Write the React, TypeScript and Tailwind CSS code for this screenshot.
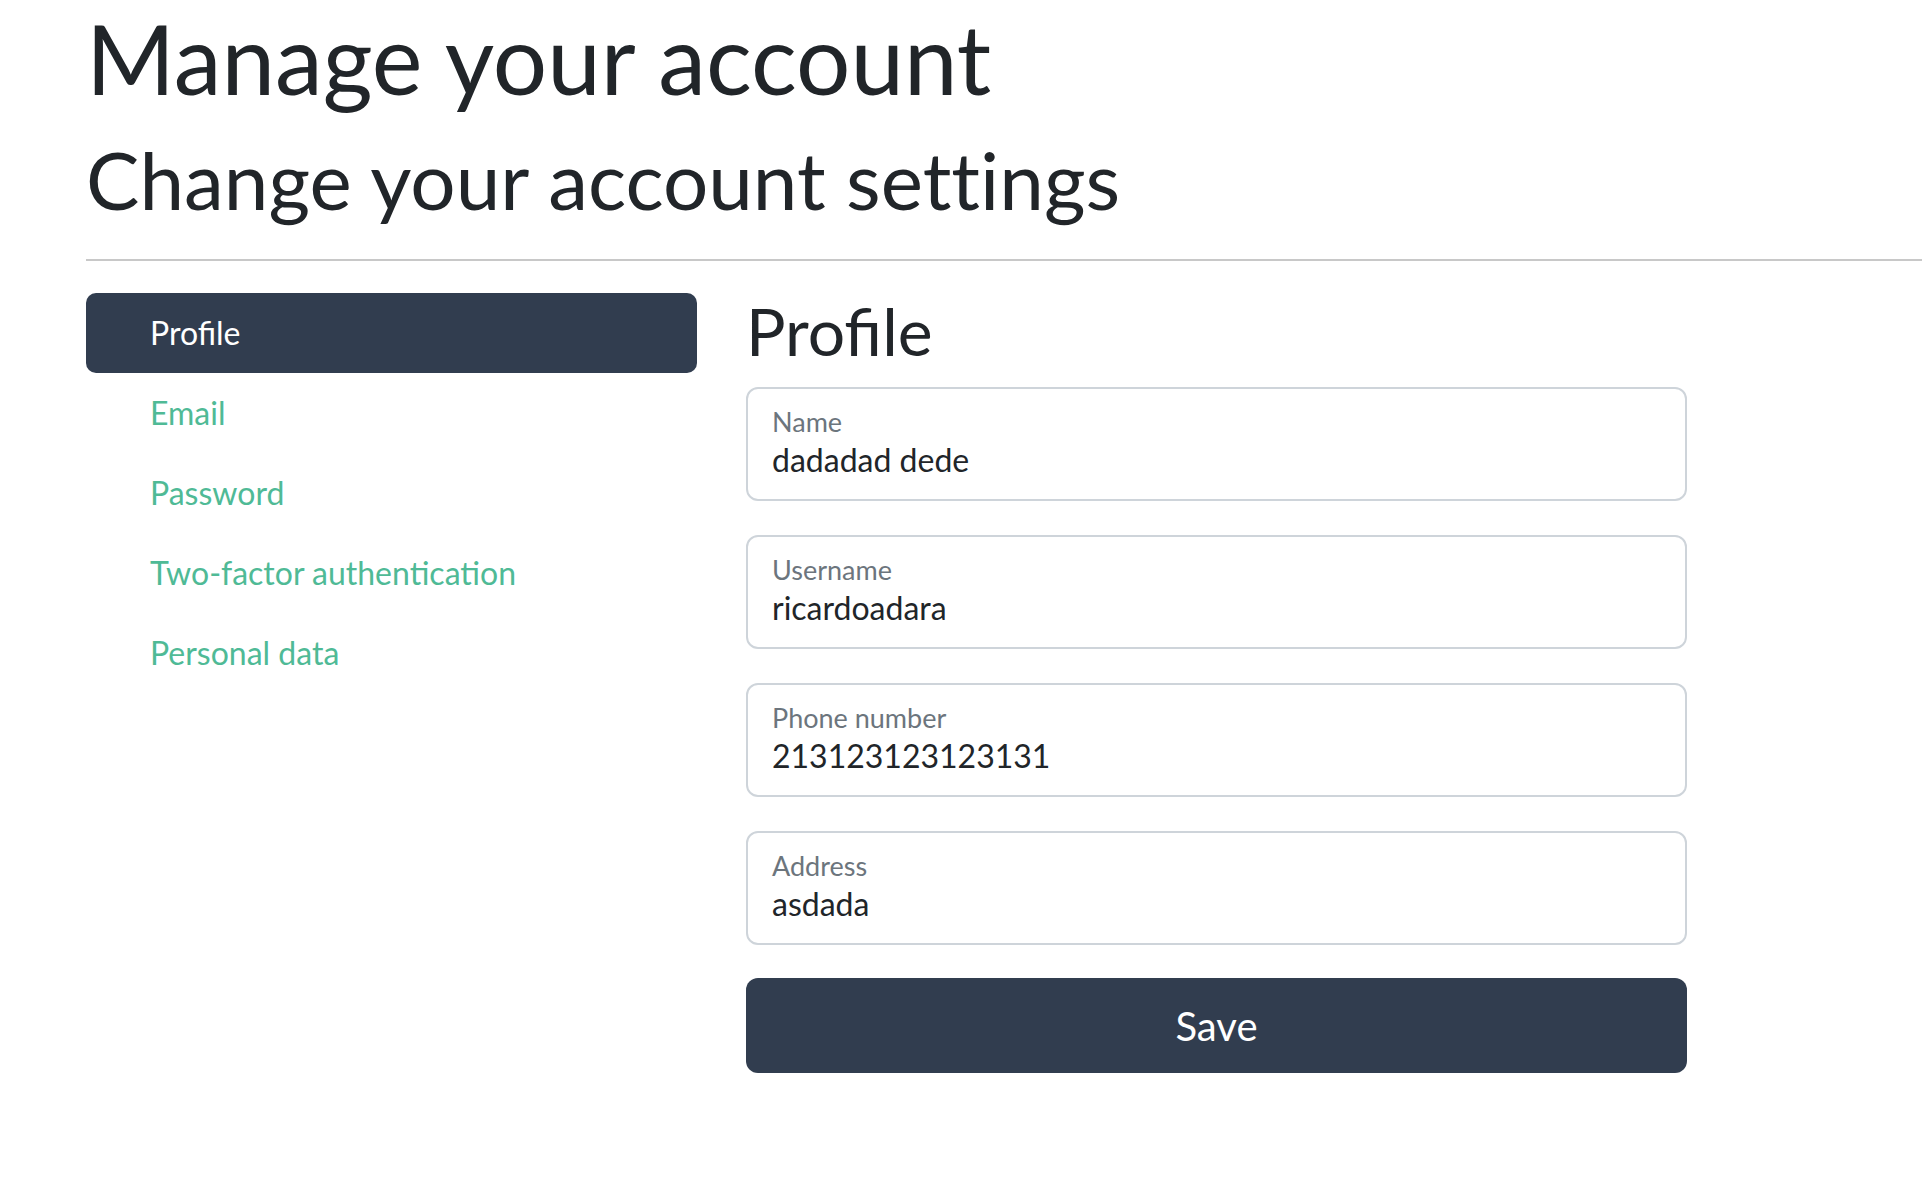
const navItems = ["Profile", "Email", "Password", "Two-factor authentication", "Personal data"];

const fields = [
  { label: "Name", value: "dadadad dede" },
  { label: "Username", value: "ricardoadara" },
  { label: "Phone number", value: "213123123123131" },
  { label: "Address", value: "asdada" },
];

export default function App() {
  return (
    <div className="min-h-screen bg-white font-['Lato',sans-serif] text-[#212529] pl-[86px]">
      {/* Header */}
      <h1 className="text-[96px] leading-[1.2] font-normal">Manage your account</h1>
      <h2 className="mt-[16px] text-[80px] leading-[1.2] font-normal [font-variant-ligatures:none]">
        Change your account settings
      </h2>
      <hr className="mt-[32px] border-0 h-[2px] bg-[#c8c8c8]" />

      <div className="mt-[32px] flex gap-[49px]">
        {/* Sidebar */}
        <nav className="w-[611px] flex flex-col">
          {navItems.map((item, i) => (
            <a
              key={item}
              href="#"
              className={`h-[80px] flex items-center pl-[64px] text-[32px] leading-[46px] rounded-[10px] ${
                i === 0 ? "bg-[#313d4f] text-white" : "text-[#4fba96]"
              }`}
            >
              {item}
            </a>
          ))}
        </nav>

        {/* Profile form */}
        <div className="w-[941px]">
          <h3 className="text-[66px] leading-[76px] font-normal">Profile</h3>
          <div className="mt-[18px] flex flex-col gap-[34px]">
            {fields.map((f) => (
              <div
                key={f.label}
                className="h-[114px] border-2 border-[#ced4da] rounded-[12px] px-[24px] pt-[17px] flex flex-col"
              >
                <span className="text-[27px] leading-[1.2] text-[#6c757d]">{f.label}</span>
                <span className="mt-[2px] text-[32px] leading-[1.2] text-[#212529]">{f.value}</span>
              </div>
            ))}
          </div>
          <button className="mt-[33px] w-full h-[95px] rounded-[12px] bg-[#313d4f] text-white text-[40px] leading-none">
            Save
          </button>
        </div>
      </div>
    </div>
  );
}
